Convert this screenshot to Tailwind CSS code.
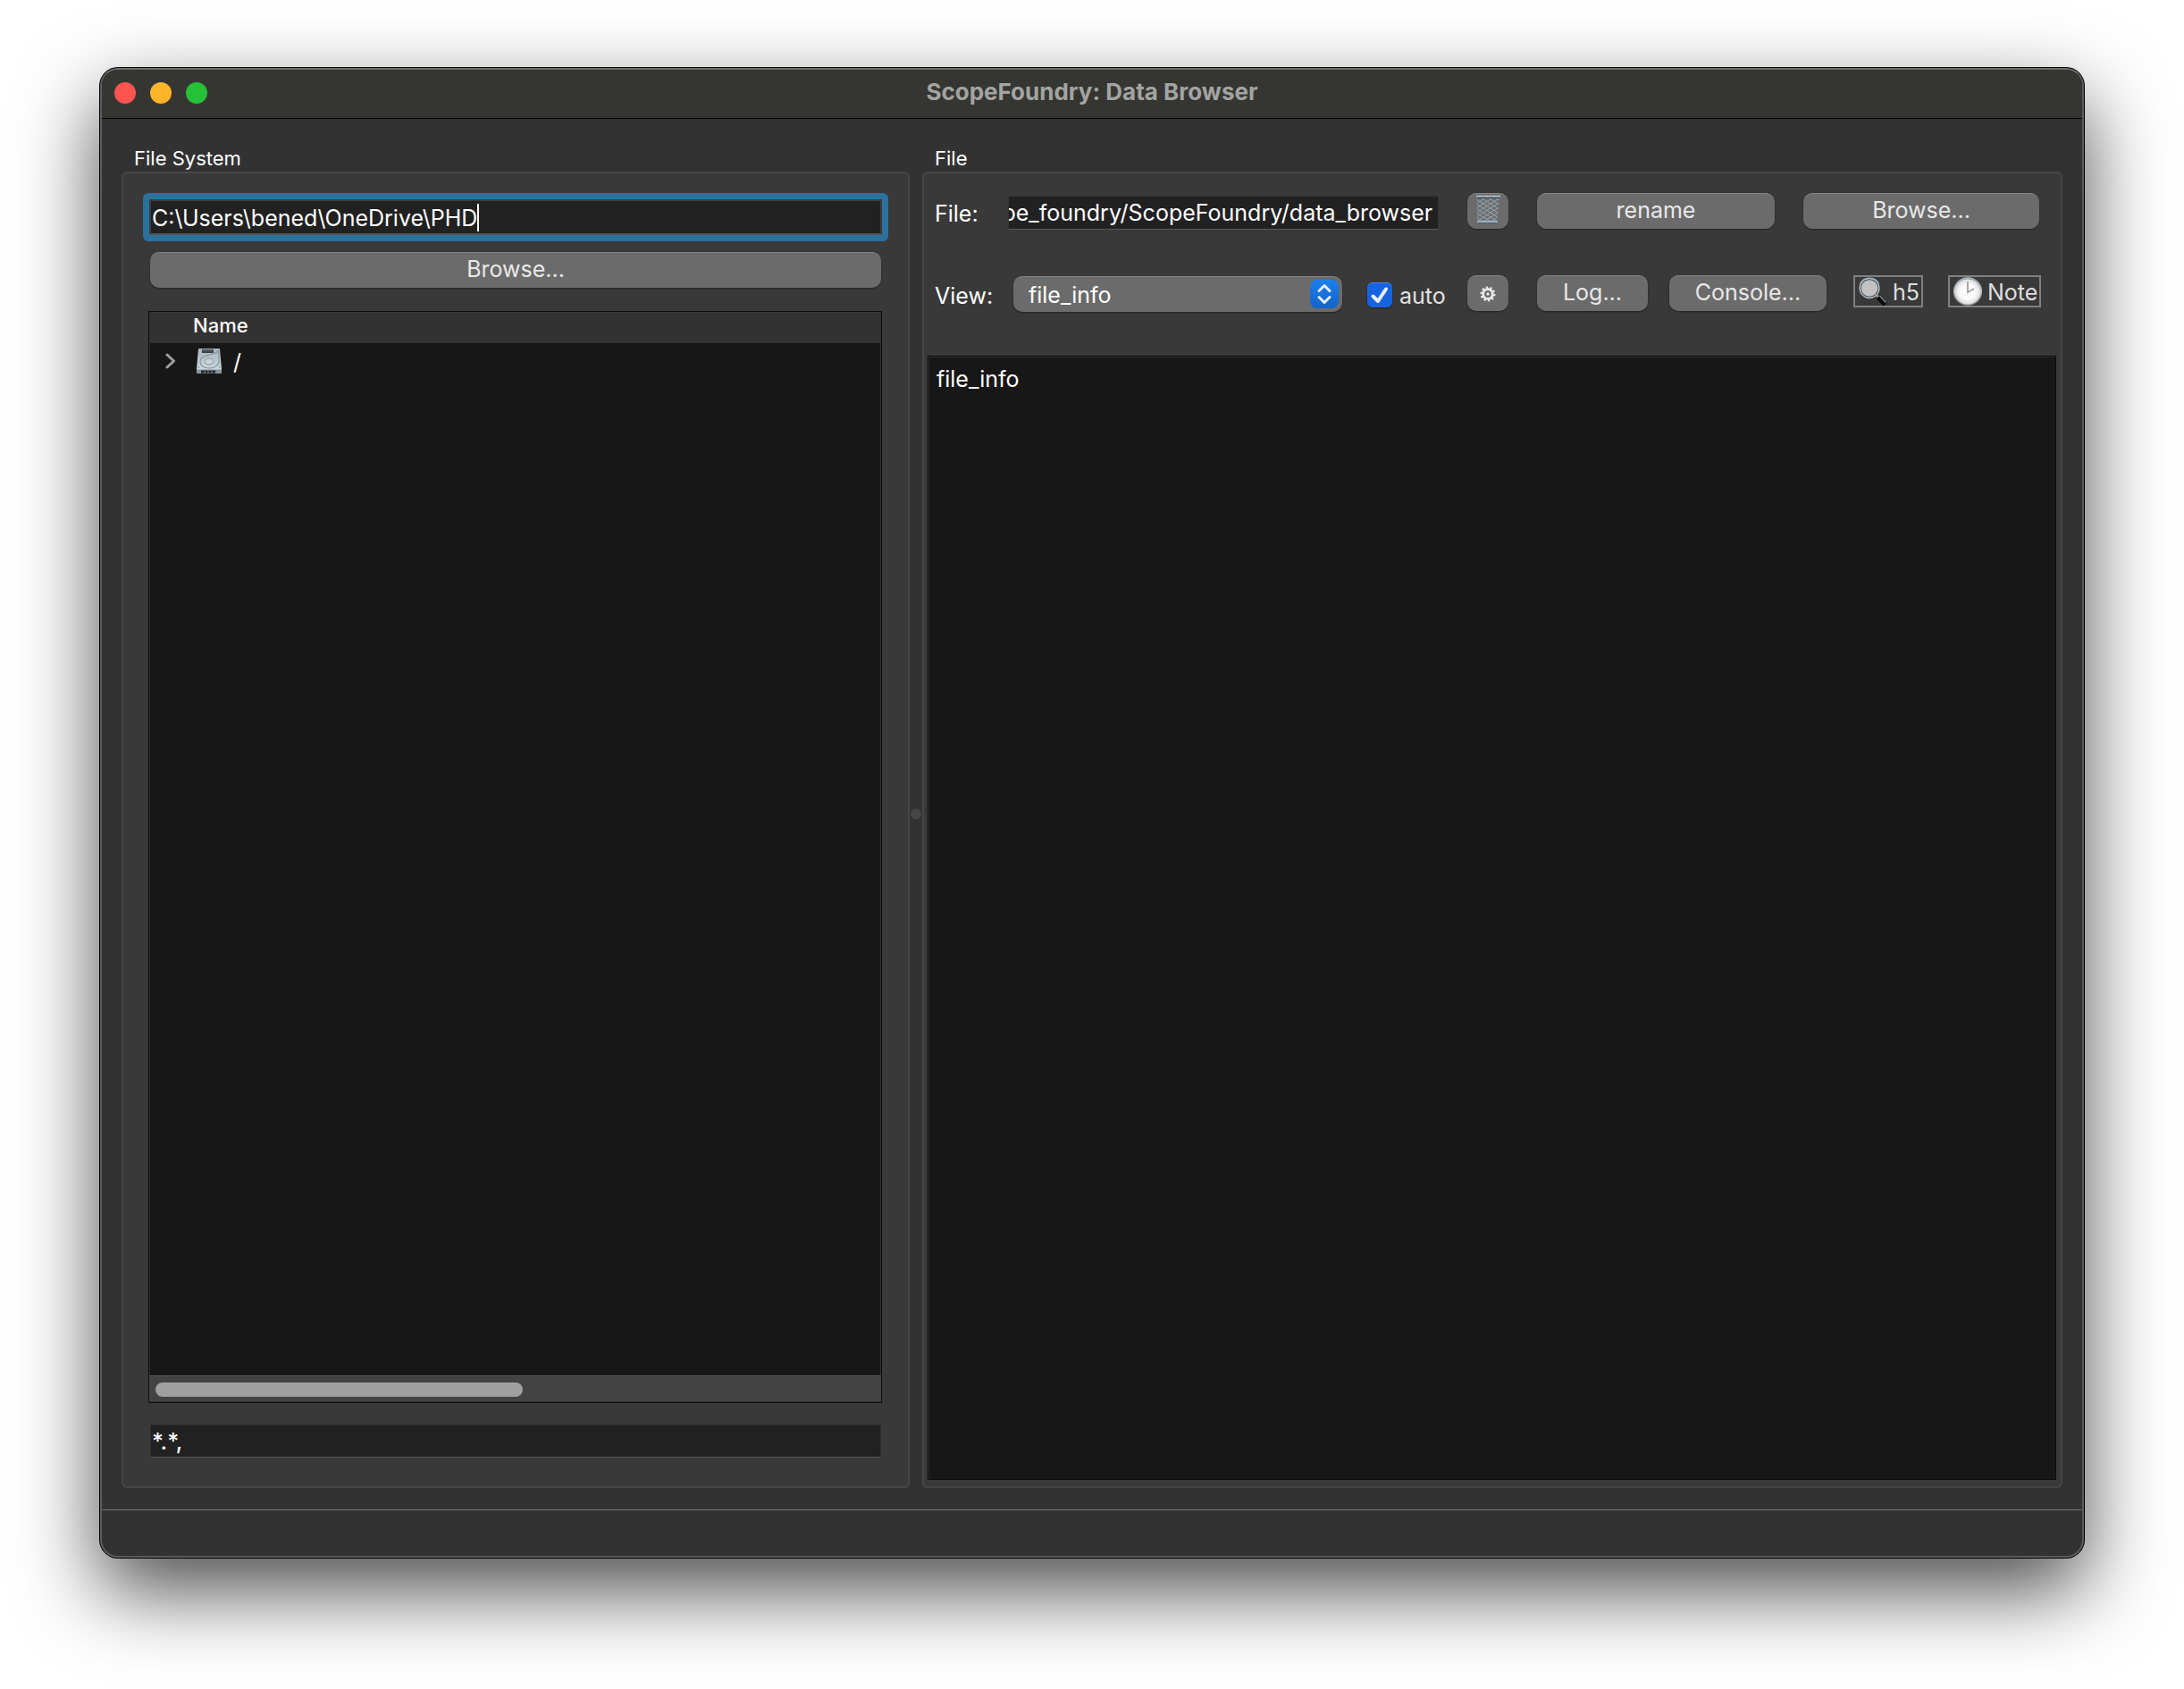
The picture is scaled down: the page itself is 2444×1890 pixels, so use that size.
<!DOCTYPE html>
<html lang="en">
<head>
<meta charset="utf-8">
<title>ScopeFoundry: Data Browser</title>
<script src="https://cdn.jsdelivr.net/npm/@tailwindcss/browser@4"></script>
</head>
<body class="flex min-h-screen flex-col bg-white px-[111px] pt-[75px] pb-[146px] font-['Inter',sans-serif] text-[25px] leading-8 text-white">
<div class="flex flex-1 flex-col rounded-[21px] bg-black p-px shadow-[0_36px_90px_rgba(0,0,0,0.7)]">
<div class="flex flex-1 flex-col overflow-hidden rounded-[20px] border-2 border-[#5c5c5c] border-t-[#6d6e6a] bg-[#323232]">

  <header class="grid h-[55px] shrink-0 grid-cols-[1fr_auto_1fr] items-center border-b border-black bg-[#353632] px-3.5 pb-1">
    <div class="flex gap-4 pt-0.5">
      <button aria-label="Close" class="size-6 rounded-full bg-[#ff5450]"></button>
      <button aria-label="Minimize" class="size-6 rounded-full bg-[#ffb429]"></button>
      <button aria-label="Zoom" class="size-6 rounded-full bg-[#27c138]"></button>
    </div>
    <h1 class="text-[26px] font-bold text-[#a3a4a1]">ScopeFoundry: Data Browser</h1>
  </header>

  <main class="grid flex-1 grid-cols-[882fr_14px_1276fr] px-[22px] pt-7 pb-6">
    <section class="flex flex-col" aria-labelledby="fs-title">
      <h2 id="fs-title" class="h-[31px] pl-3.5 text-[22px] leading-8">File System</h2>
      <div class="flex flex-1 flex-col rounded-md border-2 border-[#464646] bg-[#393939] px-[22px] pt-[22px] pb-8">
        <div class="relative rounded-md bg-[#2a719e] p-[7px]">
          <input type="text" aria-label="Folder" value="C:\Users\bened\OneDrive\PHD" class="block h-10 w-full border-2 border-[#3c3c3c] border-b-[#555] bg-[#212121] px-px pt-0.5 outline-none">
          <span class="absolute top-3 left-[374px] h-[31px] w-0.5 bg-white"></span>
        </div>
        <button class="mx-2 mt-3 h-10 rounded-[10px] border-t border-[#858585] bg-[#6b6b6b] pb-1 text-[#e8e8e8] shadow-[0_1px_2px_rgba(0,0,0,0.4)]">Browse...</button>
        <div class="mr-[7px] ml-1.5 mt-[26px] flex flex-1 flex-col border border-[#0c0c0c] bg-[#171717]">
          <div class="flex-1 border-x border-[#303030]">
            <table class="w-full text-left">
              <thead>
                <tr class="bg-[#323232]"><th scope="col" class="border-t border-[#3a3a3a] pb-1.5 pl-12 text-[22px] leading-7 font-medium">Name</th></tr>
              </thead>
              <tbody>
                <tr><td class="h-10 pl-[17px]">
                  <div class="flex items-center">
                    <svg class="h-[18px] w-3" viewBox="0 0 12 18" fill="none" stroke="#a0a0a0" stroke-width="3" stroke-linecap="round" stroke-linejoin="round"><path d="M2 2l7.500 7L2 16"/></svg>
                    <svg class="ml-[22px] h-[30px] w-[30px]" viewBox="0 0 30 30">
                      <defs><linearGradient id="disk" x1="0" y1="0" x2="0" y2="1"><stop offset="0" stop-color="#a9b5bb"/><stop offset="1" stop-color="#cfe0e8"/></linearGradient></defs>
                      <path d="M3 1h24l2 23v4q0 1-1 1H2q-1 0-1-1v-4z" fill="url(#disk)"/>
                      <path d="M1 24.500h28V28q0 1-1 1H2q-1 0-1-1z" fill="#87949a"/>
                      <path d="M6 25.500h16v3H6z" fill="#23282b"/><path d="M10 25.500v3M14 25.500v3M18 25.500v3" stroke="#7d898f"/>
                      <path d="M7 2h13v4H7z" fill="#3d454a"/><path d="M8 3.500h11" stroke="#59646a"/>
                      <path d="M26 3v12c0 5-5 8-11 8-6 0-10-3-10-7 0-6 5-6 10-8 4-1 9-1 10-5" fill="none" stroke="#8795a0" stroke-width="1.200"/>
                      <ellipse cx="15" cy="15.500" rx="4.500" ry="3.500" fill="#c9d5dc" stroke="#8b98a1"/>
                      <circle cx="3.500" cy="22" r=".8" fill="#75838c"/><circle cx="26.500" cy="22" r=".8" fill="#75838c"/>
                    </svg>
                    <span class="ml-3 pt-0.5">/</span>
                  </div>
                </td></tr>
              </tbody>
            </table>
          </div>
          <div class="flex h-[30px] items-center border-y border-t-[#555] border-b-[#333] bg-[#434343] px-[7px] pt-0.5">
            <div class="h-4 w-[51%] rounded-full bg-[#a0a0a0]"></div>
          </div>
        </div>
        <input type="text" aria-label="Filter" value="*.*," class="mx-2 mt-6 h-[37px] border border-[#303030] border-b-[#595959] bg-[#212121] px-px font-medium outline-none">
      </div>
    </section>

    <div role="separator" aria-orientation="vertical" class="flex items-center justify-center pb-1"><span class="size-3 rounded-full bg-[#464646]"></span></div>

    <section class="flex flex-col" aria-labelledby="file-title">
      <h2 id="file-title" class="h-[31px] pl-3.5 text-[22px] leading-8">File</h2>
      <div class="flex flex-1 flex-col rounded-md border-2 border-[#464646] bg-[#393939] pt-[22px] pr-[5px] pb-[7px] pl-1">
        <div class="flex h-10 items-center pr-[19px] pl-2">
          <label for="path" class="w-[82px] pt-1.5">File:</label>
          <input id="path" type="text" value="scope_foundry/ScopeFoundry/data_browser" class="mt-1 h-[38px] w-0 min-w-0 flex-1 border border-[#333] border-b-[#595959] bg-[#212121] pr-1.5 text-right outline-none">
          <button aria-label="Delete" class="ml-8 flex h-10 w-[46px] justify-center rounded-[10px] border-t border-[#858585] bg-[#6b6b6b] pt-px shadow-[0_1px_2px_rgba(0,0,0,0.4)]">
            <svg class="h-8 w-[27px]" viewBox="0 0 27 32">
              <defs><pattern id="mesh" width="8" height="5" patternUnits="userSpaceOnUse"><path d="M0 0l8 5M8 0L0 5" stroke="#9ba1a6" stroke-width="1"/></pattern></defs>
              <path d="M1 2h25l-3 28H1z" fill="#696e73"/><path d="M1 2h25l-3 28H1z" fill="url(#mesh)"/>
              <path d="M0 1.500h27" stroke="#b4cbdf" stroke-width="1.500"/><path d="M1 3.500h25" stroke="#454f5a" stroke-width="1.500"/>
              <path d="M1 30h23" stroke="#a5c3e0" stroke-width="1.500"/><path d="M2 31.500h20" stroke="#505b66"/>
            </svg>
          </button>
          <button class="ml-8 h-10 w-[266px] rounded-[10px] border-t border-[#858585] bg-[#6b6b6b] pb-1 text-[#e8e8e8] shadow-[0_1px_2px_rgba(0,0,0,0.4)]">rename</button>
          <button class="ml-8 h-10 w-[264px] rounded-[10px] border-t border-[#858585] bg-[#6b6b6b] pb-1 text-[#e8e8e8] shadow-[0_1px_2px_rgba(0,0,0,0.4)]">Browse...</button>
        </div>

        <div class="mt-[52px] flex h-10 items-center pr-[17px] pl-2">
          <label for="view" class="w-[88px] pt-1.5">View:</label>
          <div class="relative flex-1">
            <select id="view" class="mt-0.5 block h-10 w-full appearance-none rounded-[10px] border-t border-[#858585] bg-[#6b6b6b] pl-[17px] shadow-[0_1px_2px_rgba(0,0,0,0.4)]"><option>file_info</option></select>
            <svg class="pointer-events-none absolute top-1.5 right-1 size-8" viewBox="0 0 32 32" fill="none">
              <defs><linearGradient id="blue" x1="0" y1="0" x2="0" y2="1"><stop offset="0" stop-color="#1b7fee"/><stop offset="1" stop-color="#1263c7"/></linearGradient></defs>
              <rect width="32" height="32" rx="8" fill="url(#blue)"/>
              <path d="M10 12.500l6-6 6 6M10 19.500l6 6 6-6" stroke="#e4eefb" stroke-width="3" stroke-linecap="round" stroke-linejoin="round"/>
            </svg>
          </div>
          <label class="ml-7 flex w-[112px] items-center gap-2 pt-1 text-[#e1e1e1]">
            <span class="relative size-7">
              <input type="checkbox" checked class="block size-7 appearance-none rounded-md border-t border-[#4a8bf0] bg-[#1762df] shadow-[0_1px_2px_rgba(0,0,0,0.4)]">
              <svg class="pointer-events-none absolute inset-0 size-7" viewBox="0 0 28 28" fill="none" stroke="#e8effc" stroke-width="4" stroke-linecap="round" stroke-linejoin="round"><path d="M6.500 15.500l5.500 5.500L21 7.500"/></svg>
            </span><span class="pt-0.5">auto</span></label>
          <button aria-label="Settings" class="flex h-10 w-[46px] items-center justify-center rounded-[10px] border-t border-[#858585] bg-[#6b6b6b] shadow-[0_1px_2px_rgba(0,0,0,0.4)]">
            <svg class="size-[18px]" viewBox="0 0 18 18" fill="none" stroke="#ececec"><circle cx="9" cy="9" r="5.300" stroke-width="2.800"/><circle cx="9" cy="9" r="7.400" stroke-width="2.200" stroke-dasharray="2.320 2.320"/><circle cx="9" cy="9" r="1.700" fill="#ececec" stroke="none"/></svg>
          </button>
          <button class="ml-8 h-10 w-[124px] rounded-[10px] border-t border-[#858585] bg-[#6b6b6b] pb-1 text-[#e8e8e8] shadow-[0_1px_2px_rgba(0,0,0,0.4)]">Log...</button>
          <button class="ml-6 h-10 w-44 rounded-[10px] border-t border-[#858585] bg-[#6b6b6b] pb-1 text-[#e8e8e8] shadow-[0_1px_2px_rgba(0,0,0,0.4)]">Console...</button>
          <button class="mb-1 ml-[30px] flex h-9 w-[78px] items-center border-2 border-[#808080] pl-1 text-[#dedede]">
            <svg class="size-8 shrink-0" viewBox="0 0 32 32">
              <path d="M19 19.500l4 4" stroke="#9a9ea2" stroke-width="3"/>
              <path d="M22 22l8 8.500" stroke="#050607" stroke-width="6"/><path d="M23.500 21l7 7.500" stroke="#7c868d" stroke-width="1.800"/>
              <circle cx="12" cy="12.500" r="10.500" fill="#c2c2c2" stroke="#4d5961" stroke-width="2.400"/><circle cx="12" cy="12.500" r="11" fill="none" stroke="#e5eaee" stroke-width="1"/><path d="M1.500 8a11.500 11.500 0 0 1 21 0" fill="none" stroke="#9db4ca" stroke-width="1.500"/>
            </svg>
            <span class="ml-1.5 pt-0.5">h5</span>
          </button>
          <button class="mb-1 ml-7 flex h-9 w-[104px] items-center border-2 border-[#808080] pl-1 text-[#dedede]">
            <svg class="size-8 shrink-0" viewBox="0 0 32 32">
              <defs><linearGradient id="rim" x1="0" y1="0" x2="0" y2="1"><stop offset="0" stop-color="#93a3b6"/><stop offset=".5" stop-color="#c4c4c4"/><stop offset="1" stop-color="#8d8d8d"/></linearGradient><radialGradient id="dial"><stop offset=".6" stop-color="#fbfbfb"/><stop offset="1" stop-color="#dcdcdc"/></radialGradient></defs>
              <circle cx="16" cy="16" r="16" fill="url(#rim)"/><circle cx="16" cy="16.500" r="14" fill="url(#dial)"/>
              <path d="M16 5v12l7-4" fill="none" stroke="#a5a9ae" stroke-width="2"/>
            </svg>
            <span class="ml-1.5 pt-0.5">Note</span>
          </button>
        </div>

        <div class="mt-[50px] flex-1 border border-[#0c0c0c] bg-[#171717]">
          <div class="h-full border-t border-l border-[#303030] px-2 pt-2">file_info</div>
        </div>
      </div>
    </section>
  </main>

  <footer class="h-[52px] shrink-0 border-t border-[#737373]"></footer>
</div>
</div>
<script>
  // Keep the end of a long path in view.
  const path = document.getElementById('path');
  path.scrollLeft = path.scrollWidth;
</script>
</body>
</html>
